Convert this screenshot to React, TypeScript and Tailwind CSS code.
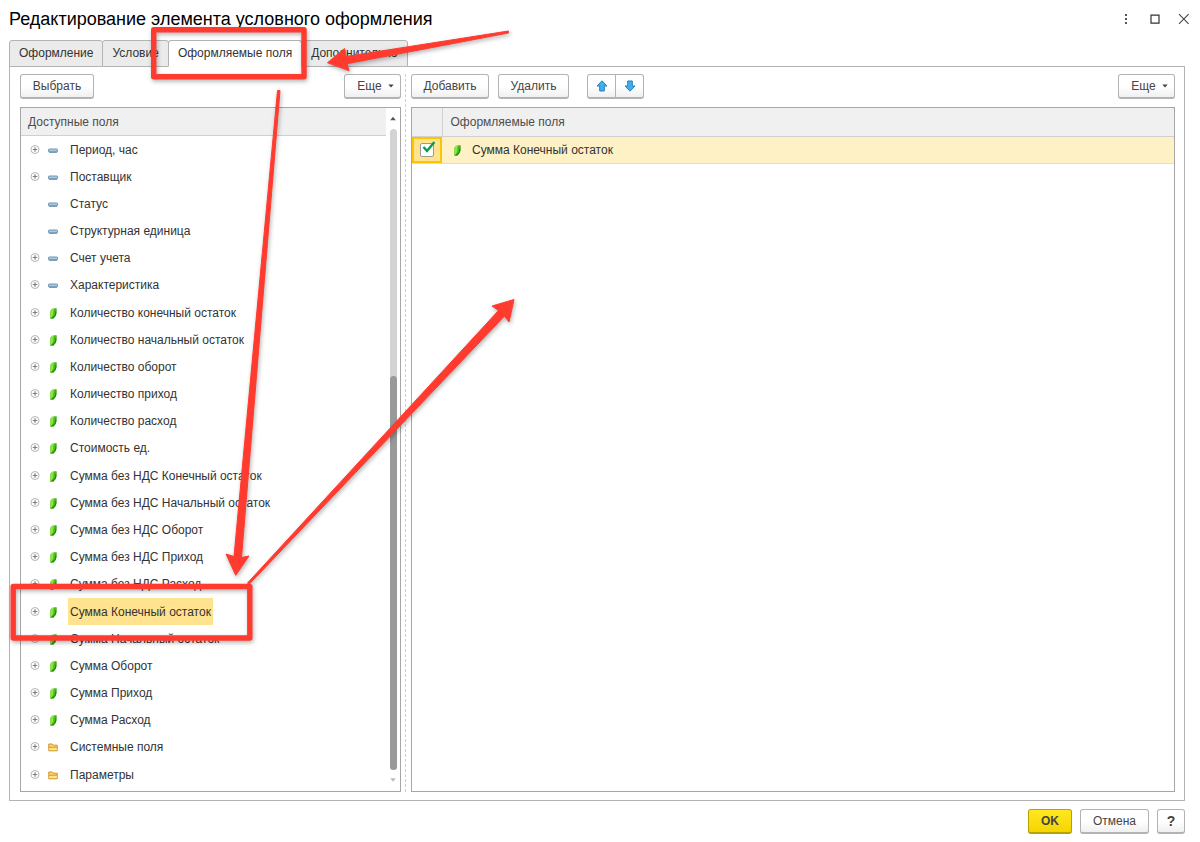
import React, { useState } from "react";

type Kind = "dash" | "leaf" | "folder";
type Field = { name: string; kind: Kind; expandable?: boolean };

const fields: Field[] = [
  { name: "Период, час", kind: "dash", expandable: true },
  { name: "Поставщик", kind: "dash", expandable: true },
  { name: "Статус", kind: "dash" },
  { name: "Структурная единица", kind: "dash" },
  { name: "Счет учета", kind: "dash", expandable: true },
  { name: "Характеристика", kind: "dash", expandable: true },
  { name: "Количество конечный остаток", kind: "leaf", expandable: true },
  { name: "Количество начальный остаток", kind: "leaf", expandable: true },
  { name: "Количество оборот", kind: "leaf", expandable: true },
  { name: "Количество приход", kind: "leaf", expandable: true },
  { name: "Количество расход", kind: "leaf", expandable: true },
  { name: "Стоимость ед.", kind: "leaf", expandable: true },
  { name: "Сумма без НДС Конечный остаток", kind: "leaf", expandable: true },
  { name: "Сумма без НДС Начальный остаток", kind: "leaf", expandable: true },
  { name: "Сумма без НДС Оборот", kind: "leaf", expandable: true },
  { name: "Сумма без НДС Приход", kind: "leaf", expandable: true },
  { name: "Сумма без НДС Расход", kind: "leaf", expandable: true },
  { name: "Сумма Конечный остаток", kind: "leaf", expandable: true },
  { name: "Сумма Начальный остаток", kind: "leaf", expandable: true },
  { name: "Сумма Оборот", kind: "leaf", expandable: true },
  { name: "Сумма Приход", kind: "leaf", expandable: true },
  { name: "Сумма Расход", kind: "leaf", expandable: true },
  { name: "Системные поля", kind: "folder", expandable: true },
  { name: "Параметры", kind: "folder", expandable: true },
];

const tabs = ["Оформление", "Условие", "Оформляемые поля", "Дополнительно"];

function PlusIcon() {
  return (
    <svg width="10" height="10" viewBox="0 0 10 10" fill="none" aria-hidden="true">
      <circle cx="5" cy="4.5" r="4" stroke="#b4b4b4" />
      <path d="M5 2.2v4.6M2.7 4.5h4.6" stroke="#808080" strokeWidth="1.2" />
    </svg>
  );
}

function KindIcon({ kind }: { kind: Kind }) {
  if (kind === "dash") {
    return (
      <svg width="10" height="12" viewBox="0 0 10 12" aria-hidden="true">
        <rect x="0.5" y="5" width="9" height="3" rx="0.8" fill="#a9c8de" stroke="#6f97b5" />
        <path d="M1 8.2h8" stroke="#4f7896" strokeWidth="0.8" />
      </svg>
    );
  }
  if (kind === "leaf") {
    return (
      <svg width="10" height="12" viewBox="0 0 10 12" aria-hidden="true">
        <path d="M2.2 4.8Q2.5 2.6 4.4 1.8L8.4 1v5.6Q8 9.8 5.4 11.4L2.2 11.6z" fill="#46bd17" />
        <path d="M2.2 4.8Q2.5 2.6 4.4 1.8L6 1.5Q5.2 4 5.2 7.5L3.6 10.6 2.2 11.6z" fill="#8fe34a" />
        <path d="M8.4 1v5.6Q8 9.8 5.4 11.4L2.2 11.6 5.8 9.4Q7.2 8 7.4 5z" fill="#23850c" />
      </svg>
    );
  }
  return (
    <svg width="10" height="12" viewBox="0 0 10 12" aria-hidden="true">
      <path d="M0.8 9.8V3h3.4l1 1.2h4v5.6z" fill="#ffd966" stroke="#cf8f2e" />
      <path d="M1 6.2h8" stroke="#cf8f2e" strokeWidth="0.9" />
      <path d="M1.4 7.2h7.3v1.9H1.4z" fill="#ffe98a" />
    </svg>
  );
}

function Caret() {
  return (
    <svg width="6" height="4" viewBox="0 0 6 4" aria-hidden="true">
      <path d="M0.3 0.5h5.4L3 3.5z" fill="#444" />
    </svg>
  );
}

function BlueArrow({ down = false }: { down?: boolean }) {
  return (
    <svg width="12" height="12" viewBox="0 0 12 12" className={down ? "rotate-180" : ""} aria-hidden="true">
      <path d="M6 0.8 11 6H8.3v5H3.7V6H1z" fill="#3fb0ef" stroke="#2b7fb3" strokeLinejoin="round" />
    </svg>
  );
}

const buttonBase =
  "flex h-[25px] items-center justify-center rounded-[3px] border border-b-2 border-[#b3b3b3] bg-linear-to-b from-white from-50% to-[#f0f0f0] text-[#444]";

function ToolButton({ className = "", children, ...rest }: React.ButtonHTMLAttributes<HTMLButtonElement>) {
  return (
    <button type="button" className={`${buttonBase} ${className}`} {...rest}>
      {children}
    </button>
  );
}

function Annotations() {
  return (
    <svg
      className="pointer-events-none absolute top-0 left-0 drop-shadow-[1px_2px_2px_rgba(0,0,0,0.3)]"
      width="1200"
      height="842"
      viewBox="0 0 1200 842"
      fill="#ff3b30"
      aria-hidden="true"
    >
      <g fill="none" stroke="#ff3b30" strokeWidth="5.4" strokeLinejoin="round">
        <rect x="153.7" y="29.7" width="150.3" height="47" />
        <rect x="13.2" y="586.5" width="236.6" height="51.5" />
      </g>
      <g stroke="#ff3b30" strokeWidth="1" strokeLinejoin="round">
        <path d="M508.5 31 346 56.5 344.5 48.5 327.5 62.7 349 70.7 347 63.7 508.5 33z" />
        <path d="M277.5 90.5 234 556.5 226 554 235.7 575.3 249 556 241.5 557.5 280 90.5z" />
        <path d="M247.5 583 498.5 310.5 492 306 514 299.5 509 322 504.5 316 249 584.5z" />
      </g>
    </svg>
  );
}

export default function App() {
  const [selected, setSelected] = useState("Сумма Конечный остаток");
  const [activeTab, setActiveTab] = useState("Оформляемые поля");
  const [enabled, setEnabled] = useState(true);

  return (
    <div className="relative flex min-h-screen flex-col overflow-hidden bg-white px-[9px] pb-2 font-['Liberation_Sans',Arial,sans-serif] text-xs text-[#333]">
      <header className="flex h-10 items-center justify-between pr-px pb-0.5">
        <h1 className="text-lg text-black">Редактирование элемента условного оформления</h1>
        <div className="flex items-center gap-[18px]">
          <button type="button" aria-label="Меню">
            <svg width="12" height="12" viewBox="0 0 12 12" fill="#555" aria-hidden="true">
              <path d="M5 1h2v2H5zM5 5h2v2H5zM5 9h2v2H5z" />
            </svg>
          </button>
          <button type="button" aria-label="Развернуть">
            <svg width="10" height="10" viewBox="0 0 10 10" fill="none" stroke="#333" strokeWidth="1.2" aria-hidden="true">
              <path d="M1 1.2h8v8H1z" />
            </svg>
          </button>
          <button type="button" aria-label="Закрыть">
            <svg width="12" height="12" viewBox="0 0 12 12" stroke="#444" strokeWidth="1.1" aria-hidden="true">
              <path d="M1 1.2l9.6 9.6M10.6 1.2l-9.6 9.6" />
            </svg>
          </button>
        </div>
      </header>

      <div role="tablist" className="z-0 -mb-px flex h-[27px]">
        {tabs.map((tab) => (
          <button
            key={tab}
            type="button"
            role="tab"
            aria-selected={tab === activeTab}
            onClick={() => setActiveTab(tab)}
            className={`-mr-px rounded-t-[3px] border border-[#b3b3b3] px-[9px] pb-px ${
              tab === activeTab ? "border-b-white bg-white" : "bg-[#ebebeb]"
            }`}
          >
            {tab}
          </button>
        ))}
      </div>

      <main className="mr-[6px] flex flex-1 border border-[#b3b3b3] pt-[7px] pr-[9px] pb-2 pl-[10px]">
        <section className="flex w-[381px] shrink-0 flex-col gap-2">
          <div className="flex justify-between">
            <ToolButton className="w-[74px]">Выбрать</ToolButton>
            <ToolButton className="w-[57px] gap-1.5 pl-1.5">
              Еще <Caret />
            </ToolButton>
          </div>
          <div className="flex flex-1 border border-[#a6a6a6]">
            <div className="flex flex-1 flex-col">
              <h2 className="flex h-7 items-center border-b border-[#d0d0d0] bg-[#f0f0f0] pl-[7px] text-[#4d4d4d]">
                Доступные поля
              </h2>
              <ul className="flex flex-1 flex-col pb-[3px]">
                {fields.map((field) => (
                  <li key={field.name} className="flex min-h-[27px] flex-1 items-center pl-[9px]">
                    <span className="flex w-[10px]">
                      {field.expandable && (
                        <button type="button" aria-label={`Раскрыть ${field.name}`}>
                          <PlusIcon />
                        </button>
                      )}
                    </span>
                    <span className="mr-[10px] ml-2">
                      <KindIcon kind={field.kind} />
                    </span>
                    <button
                      type="button"
                      onClick={() => setSelected(field.name)}
                      className={`h-[27px] px-0.5 ${field.name === selected ? "bg-[#ffe38e]" : ""}`}
                    >
                      {field.name}
                    </button>
                  </li>
                ))}
              </ul>
            </div>
            <div className="flex w-[14px] flex-col items-center gap-2 pt-2 pb-[9px]">
              <svg width="6" height="5" viewBox="0 0 6 5" aria-hidden="true">
                <path d="M0.2 4.3h5.6L3 0.8z" fill="#555" />
              </svg>
              <div className="flex w-[7px] flex-1 flex-col justify-end rounded-full bg-[#d3d3d3]">
                <div className="h-[61.5%] rounded-full bg-[#999]" />
              </div>
              <svg width="6" height="4" viewBox="0 0 6 4" aria-hidden="true">
                <path d="M0.3 0.3h5.4L3 3.7z" fill="#b8b8b8" />
              </svg>
            </div>
          </div>
        </section>

        <div className="ml-1 w-px border-l border-dashed border-[#cfcfcf]" />

        <section className="ml-[5px] flex flex-1 flex-col gap-2">
          <div className="flex">
            <ToolButton className="w-[78px]">Добавить</ToolButton>
            <ToolButton className="ml-[9px] w-[71px]">Удалить</ToolButton>
            <ToolButton className="ml-[18px] w-[29px] rounded-r-none" aria-label="Вверх">
              <BlueArrow />
            </ToolButton>
            <ToolButton className="-ml-px w-[29px] rounded-l-none" aria-label="Вниз">
              <BlueArrow down />
            </ToolButton>
            <ToolButton className="ml-auto w-[57px] gap-1.5 pl-1.5">
              Еще <Caret />
            </ToolButton>
          </div>
          <div className="flex-1 border border-[#a6a6a6]">
            <table className="w-full border-collapse text-left">
              <thead>
                <tr className="h-7 border-b border-[#d0d0d0] bg-[#f0f0f0] text-[#4d4d4d]">
                  <th className="w-[30px] border-r border-[#d0d0d0] p-0" aria-label="Использование" />
                  <th className="py-0 pr-0 pl-2 font-normal">Оформляемые поля</th>
                </tr>
              </thead>
              <tbody>
                <tr className="h-[27px] border-b border-[#dcdcdc] bg-[#fdf1c5]">
                  <td className="p-0">
                    <label className="relative flex h-[26px] w-[30px] items-center justify-center border-2 border-[#fdc400] bg-[#ffe38e]">
                      <input
                        type="checkbox"
                        checked={enabled}
                        onChange={(e) => setEnabled(e.target.checked)}
                        aria-label="Сумма Конечный остаток"
                        className="size-[14px] appearance-none rounded-[2px] border border-[#9a9a9a] bg-white"
                      />
                      {enabled && (
                        <svg className="absolute top-0.5 left-[7px]" width="15" height="15" viewBox="0 0 15 15" fill="none" aria-hidden="true">
                          <path d="M2.5 6 6 10 13.4 1" stroke="#0a9c47" strokeWidth="2.4" />
                        </svg>
                      )}
                    </label>
                  </td>
                  <td className="p-0">
                    <div className="flex items-center gap-[10px] pl-[10px]">
                      <KindIcon kind="leaf" />
                      Сумма Конечный остаток
                    </div>
                  </td>
                </tr>
              </tbody>
            </table>
          </div>
        </section>
      </main>

      <footer className="mt-2 mr-[6px] flex justify-end gap-2">
        <button
          type="button"
          className="h-[25px] w-[44px] rounded-[3px] border border-b-2 border-[#b9a200] bg-linear-to-b from-[#ffe81f] to-[#f5d400] font-bold text-[#444]"
        >
          OK
        </button>
        <ToolButton className="w-[69px]">Отмена</ToolButton>
        <ToolButton className="w-[28px] text-sm font-bold" aria-label="Справка">
          ?
        </ToolButton>
      </footer>

      <Annotations />
    </div>
  );
}
